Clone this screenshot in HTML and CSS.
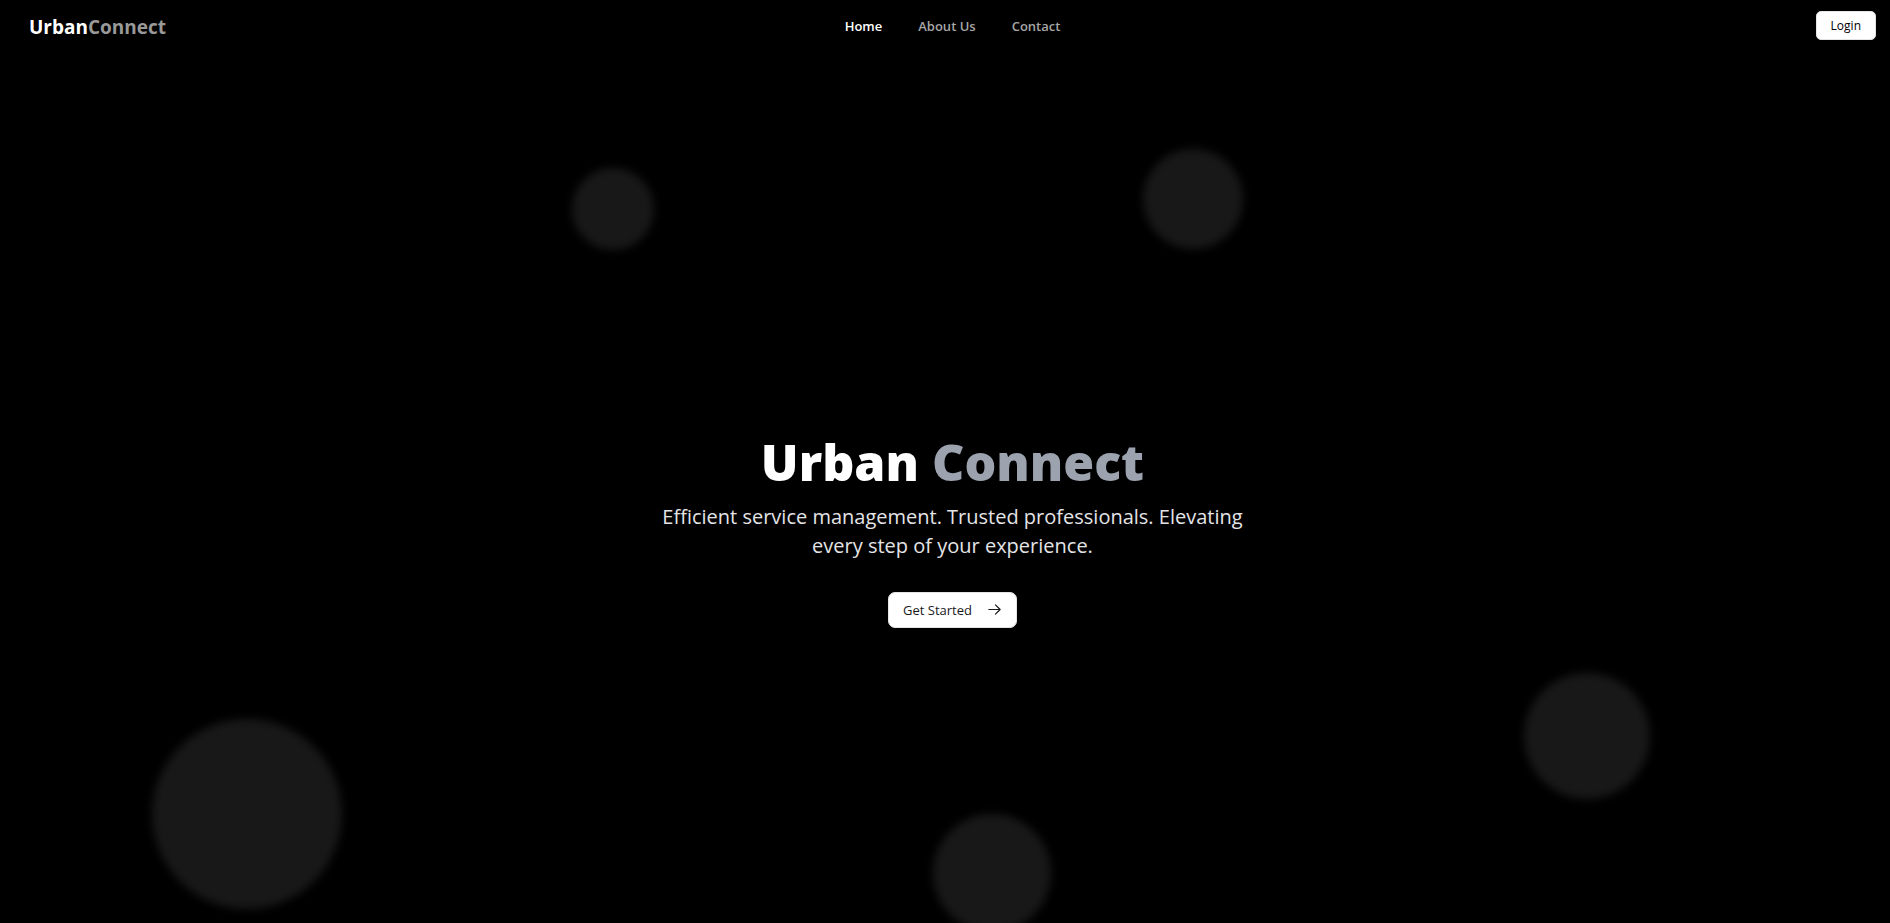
FILE: index.html
```html
<!DOCTYPE html>
<html lang="en">
<head>
  <meta charset="utf-8">
  <meta name="viewport" content="width=device-width, initial-scale=1">
  <title>UrbanConnect</title>
  <link rel="stylesheet" href="styles.css">
</head>
<body class="page">
  <header class="header">
    <a class="brand" href="#">Urban<span class="brand-muted">Connect</span></a>
    <nav class="nav" aria-label="Main">
      <a class="nav-link nav-link-active" href="#">Home</a>
      <a class="nav-link" href="#">About Us</a>
      <a class="nav-link" href="#">Contact</a>
    </nav>
    <div class="header-actions">
      <button class="button button-login" type="button">Login</button>
    </div>
  </header>
  <main class="hero">
    <div class="bubbles" aria-hidden="true">
      <span class="bubble bubble-a"></span>
      <span class="bubble bubble-b"></span>
      <span class="bubble bubble-c"></span>
      <span class="bubble bubble-d"></span>
      <span class="bubble bubble-e"></span>
    </div>
    <h1 class="title">Urban <span class="title-muted">Connect</span></h1>
    <p class="tagline">Efficient service management. Trusted professionals. Elevating every step of your experience.</p>
    <button class="button button-start" type="button">
      Get Started
      <svg class="arrow" viewBox="0 0 16 16" fill="none" stroke="currentColor" stroke-width="1.3" stroke-linecap="round" stroke-linejoin="round" aria-hidden="true">
        <path d="M2 8h12M9 3l5 5-5 5"/>
      </svg>
    </button>
  </main>
</body>
</html>
```

FILE: styles.css
```css
* {
  box-sizing: border-box;
}

.page {
  display: flex;
  flex-direction: column;
  min-height: 100vh;
  margin: 0;
  background: #000;
  color: #fff;
  font-family: "Open Sans", "Noto Sans", sans-serif;
}

.header {
  display: grid;
  grid-template-columns: 1fr auto 1fr;
  align-items: center;
  padding: 11px 14px 9px 29px;
}

.brand {
  justify-self: start;
  color: #fff;
  font-size: 19px;
  font-weight: 700;
  line-height: 32px;
  text-decoration: none;
}

.brand-muted {
  color: #999;
}

.nav {
  display: flex;
  align-self: start;
  gap: 36px;
}

.nav-link {
  color: #a6a6a6;
  font-size: 13px;
  font-weight: 600;
  line-height: 30px;
  text-decoration: none;
}

.nav-link-active {
  color: #fff;
}

.header-actions {
  align-self: start;
  justify-self: end;
  display: flex;
}

.button {
  display: flex;
  align-items: center;
  border: 1px solid #e4e4e7;
  background: #fff;
  color: #18181b;
  font-family: inherit;
  cursor: pointer;
}

.button-login {
  padding: 0 14px;
  height: 29px;
  border-radius: 5px;
  font-size: 12px;
  color: #000;
}

.hero {
  position: relative;
  flex: 1;
  display: flex;
  flex-direction: column;
  align-items: center;
  justify-content: center;
  padding: 100px 16px 16px 31px;
  overflow: hidden;
}

.title {
  position: relative;
  margin: 0;
  font-size: 50px;
  font-weight: 800;
  line-height: 60px;
}

.title-muted {
  color: #9ca3af;
}

.tagline {
  position: relative;
  max-width: 605px;
  margin: 10px 0 32px;
  color: #e4e4e7;
  font-size: 20px;
  line-height: 29px;
  text-align: center;
}

.button-start {
  position: relative;
  gap: 15px;
  height: 36px;
  padding: 0 14px;
  border-radius: 7px;
  font-size: 13px;
}

.arrow {
  width: 15px;
  height: 15px;
}

.bubbles {
  position: absolute;
  inset: 0;
}

.bubble {
  position: absolute;
  border-radius: 50%;
  background: #181818;
  filter: blur(4px);
  transform: translate(-50%, -50%);
}

.bubble-a {
  left: 613px;
  top: 157px;
  width: 82px;
  height: 82px;
}

.bubble-b {
  left: 1193px;
  top: 147px;
  width: 100px;
  height: 100px;
}

.bubble-c {
  left: 247px;
  top: 762px;
  width: 190px;
  height: 190px;
}

.bubble-d {
  left: 992px;
  top: 821px;
  width: 118px;
  height: 118px;
}

.bubble-e {
  left: 1587px;
  top: 684px;
  width: 126px;
  height: 126px;
}
```
